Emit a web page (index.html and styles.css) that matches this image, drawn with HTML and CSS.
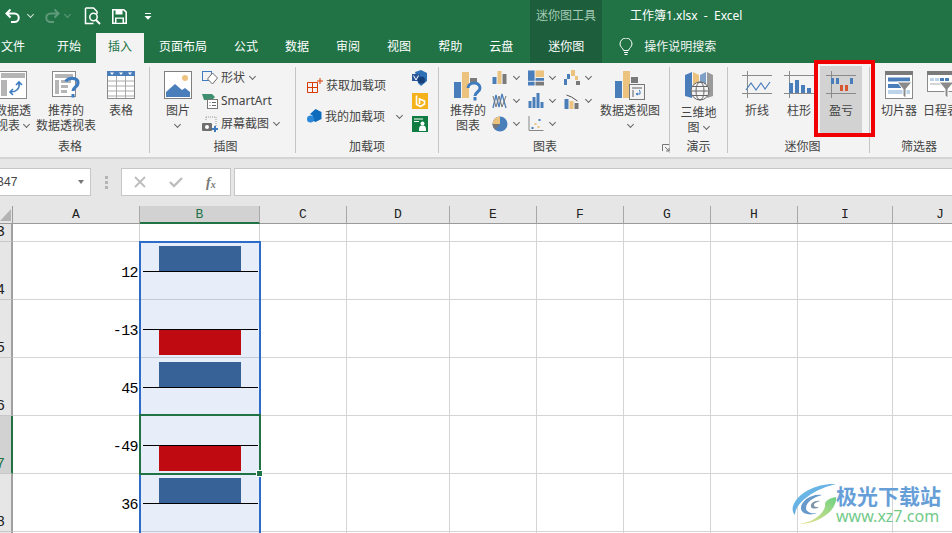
FILE: index.html
```html
<!DOCTYPE html>
<html lang="zh">
<head>
<meta charset="utf-8">
<title>工作簿1.xlsx - Excel</title>
<link rel="stylesheet" href="styles.css">
</head>
<body>
<header class="titlebar">
  <div class="qat">
    <svg class="q-undo" width="16" height="16" viewBox="0 0 16 16"><path d="M5.5 1.5 1.5 5.5 5.5 9.5M2 5.5h7.5a4.2 4.2 0 0 1 0 8.5H6" fill="none" stroke="#fff" stroke-width="2"/></svg>
    <i class="chev chev-w q-c1"></i>
    <svg class="q-redo" width="16" height="16" viewBox="0 0 16 16"><path d="M10.5 1.5 14.5 5.5 10.5 9.5M14 5.5H6.5a4.2 4.2 0 0 0 0 8.5H10" fill="none" stroke="#5f9a7b" stroke-width="2"/></svg>
    <i class="chev chev-d q-c2"></i>
    <svg class="q-prev" width="18" height="18" viewBox="0 0 18 18"><path d="M1.5 1h8l3.500 3.500V7M1.500 1v15.500h8" fill="none" stroke="#fff" stroke-width="1.500"/><circle cx="9.500" cy="10" r="3.700" fill="none" stroke="#fff" stroke-width="1.500"/><path d="m12 13 4 4" stroke="#fff" stroke-width="2"/></svg>
    <svg class="q-save" width="15" height="15" viewBox="0 0 15 15"><path d="M.8.800h11l2.400 2.400v11H.8z" fill="none" stroke="#fff" stroke-width="1.600"/><path d="M3.500 1h7v4.500h-7zM3 8.500h9V14H3z" fill="#fff"/><path d="M4.500 9.800h6v4h-6z" fill="#217346"/></svg>
    <svg class="q-cust" width="8" height="7" viewBox="0 0 8 7"><path d="M1 .5h6" stroke="#fff"/><path d="M.5 3h7L4 6.800z" fill="#fff"/></svg>
  </div>
  <div class="ctx-title">迷你图工具</div>
  <div class="doc-title">工作簿1.xlsx&nbsp; -&nbsp; Excel</div>
</header>

<nav class="tabs">
  <span class="tab tab-file">文件</span>
  <span class="tab">开始</span>
  <span class="tab tab-on">插入</span>
  <span class="tab">页面布局</span>
  <span class="tab">公式</span>
  <span class="tab">数据</span>
  <span class="tab">审阅</span>
  <span class="tab">视图</span>
  <span class="tab">帮助</span>
  <span class="tab">云盘</span>
  <span class="tab tab-ctx">迷你图</span>
  <svg class="bulb" width="14" height="18" viewBox="0 0 14 18"><path d="M4.500 12.500C4 10 1 9 1 6a6 6 0 0 1 12 0c0 3-3 4-3.500 6.500z" fill="none" stroke="#fff"/><path d="M5 14.500h4M5.500 16.500h3" stroke="#fff"/></svg>
  <span class="search">操作说明搜索</span>
</nav>

<section class="ribbon">
  <div class="group g1">
    <div class="tools">
      <div class="btn w44">
        <svg class="ico" width="28" height="28" viewBox="0 0 28 28"><rect x=".5" y=".5" width="27" height="27" fill="#fff" stroke="#8a8a8a"/><path d="M2 2h24v5H2zM2 9h6v16H2z" fill="#b5b5b5"/><path d="M20 12c1 6-3 9-8 9M17 14l3-3 3 3M14 18l-3 3 3 3" fill="none" stroke="#3f7cbf" stroke-width="1.600"/></svg>
        <span>数据透<br>视表 <i class="chev"></i></span>
      </div>
      <div class="btn w60">
        <svg class="ico ico-off" width="28" height="28" viewBox="0 0 28 28"><rect x=".5" y=".5" width="23" height="25" fill="#fff" stroke="#8a8a8a"/><path d="M3 3h18v4H3zM3 9h4v14H3zM9 9h10v3H9zM9 14h7v3H9zM9 19h6v3H9z" fill="#b5b5b5"/><path d="M14 10.500c1-4 12-5 12 1.500 0 4-5 4-5 8" fill="none" stroke="#3f7cbf" stroke-width="3.200"/><rect x="19.500" y="23" width="3" height="3.500" fill="#3f7cbf"/></svg>
        <span>推荐的<br>数据透视表</span>
      </div>
      <div class="btn w44">
        <svg class="ico" width="28" height="28" viewBox="0 0 28 28"><rect x=".5" y=".5" width="27" height="27" fill="#fff" stroke="#8a8a8a"/><path d="M0 0h28v5H0z" fill="#4a7ebb"/><path d="M1 10h26M1 15h26M1 20h26M1 25h26M9.500 5v22M18.500 5v22" stroke="#aaa"/><path d="M3 1.500h4L5 4zM12 1.500h4L14 4zM21 1.500h4L23 4z" fill="#fff"/></svg>
        <span>表格</span>
      </div>
    </div>
    <div class="glabel">表格</div>
  </div>

  <div class="group g2">
    <div class="tools">
      <div class="btn w44">
        <svg class="ico" width="28" height="28" viewBox="0 0 28 28"><rect x=".5" y=".5" width="27" height="27" fill="#fff" stroke="#7f7f7f"/><path d="M2 26v-5l9-8 7 6 3-2 5 4v5z" fill="#4a7ebb"/><circle cx="21" cy="7" r="3" fill="#eec27f"/></svg>
        <span>图片<br><i class="chev"></i></span>
      </div>
      <div class="stack">
        <div class="srow"><svg width="16" height="16" viewBox="0 0 16 16"><rect x=".5" y="1.500" width="9" height="9" fill="none" stroke="#3f7cbf"/><path d="M10.500 3 15.500 8 10.500 14 5.500 9z" fill="#fff" stroke="#6a6a6a"/></svg><span>形状</span><i class="chev"></i></div>
        <div class="srow"><svg width="16" height="16" viewBox="0 0 16 16"><path d="M0 1h10l3 3-3 3H2z" fill="#3f8f70"/><rect x="5.500" y="6.500" width="10" height="9" fill="#fff" stroke="#777"/><path d="M7.500 9.500h1M10 9.500h4M7.500 12.500h1M10 12.500h4" stroke="#666"/></svg><span>SmartArt</span></div>
        <div class="srow"><svg width="16" height="16" viewBox="0 0 16 16"><path d="M4 1h10v9" fill="none" stroke="#999" stroke-dasharray="1 1"/><path d="M4 1v4" stroke="#999" stroke-dasharray="1 1"/><rect x="0" y="7" width="10" height="8" rx="1" fill="#6f6f6f"/><circle cx="5" cy="11" r="2" fill="#fff"/><path d="M13 10v6M10 13h6" stroke="#3f7cbf" stroke-width="2"/></svg><span>屏幕截图</span><i class="chev"></i></div>
      </div>
    </div>
    <div class="glabel">插图</div>
  </div>

  <div class="group g3">
    <div class="tools">
      <div class="addins">
        <div class="arow"><svg width="16" height="16" viewBox="0 0 16 16"><path d="M.5 4.500h10v10H.5zM.5 9.500h10M5.500 4.500v10" fill="none" stroke="#d83b01"/><path d="M13 0v6M10 3h6" stroke="#d83b01"/></svg><span>获取加载项</span></div>
        <div class="arow"><svg width="15" height="15" viewBox="0 0 15 15"><path d="M8.500 0 14.500 3v7l-6 3-3-1.500V6.500L3 5z" fill="#0f6cbd"/><circle cx="3.500" cy="10" r="3.500" fill="#2b88d8"/></svg><span>我的加载项</span><i class="chev chev-add"></i></div>
      </div>
      <div class="store">
        <svg width="16" height="16" viewBox="0 0 16 16"><path d="M3 2 9 0l6 3v8l-6 5-3-3z" fill="#2f6fb5"/><rect x="0" y="4" width="8" height="7" fill="#2b579a"/><path d="m1.500 5.500 2.500 4.500 2.500-4.500" fill="none" stroke="#fff"/><circle cx="9.500" cy="10" r="3.500" fill="#173f7a"/></svg>
        <svg width="16" height="16" viewBox="0 0 16 16"><rect width="16" height="16" fill="#f5b21a"/><path d="M4.500 2.500v9l4 2 4-2.500V8L7.500 6v5" fill="none" stroke="#fff" stroke-width="1.600"/></svg>
        <svg width="16" height="16" viewBox="0 0 16 16"><rect width="16" height="16" fill="#107c41"/><path d="M2 3h9M2 5.500h5" stroke="#fff"/><circle cx="10.500" cy="7.500" r="2" fill="#fff"/><path d="M7 15c0-5 1-5.500 3.500-5.500S14 10 14 15z" fill="#fff"/></svg>
      </div>
    </div>
    <div class="glabel">加载项</div>
  </div>

  <div class="group g4">
    <div class="tools">
      <div class="btn w44">
        <svg class="ico" width="30" height="30" viewBox="0 0 30 30"><path d="M1 11h7v16H1z" fill="#4a7ebb"/><path d="M9 1h7v26H9z" fill="#ecc27f"/><path d="M17 7h7v6h-7z" fill="#7a7a7a"/><path d="M15 17c0-6 12-7 12 0 0 4-5 4-5 8" fill="none" stroke="#3f7cbf" stroke-width="3"/><rect x="20.500" y="26" width="3" height="3.500" fill="#3f7cbf"/></svg>
        <span>推荐的<br>图表</span>
      </div>
      <div class="charts">
        <div class="cc"><svg width="15" height="15" viewBox="0 0 15 15"><path d="M0 7h4v7H0z" fill="#4a7ebb"/><path d="M5 1h4v13H5z" fill="#ecc27f"/><path d="M10 4h4v10h-4z" fill="#7a7a7a"/></svg><i class="chev"></i></div>
        <div class="cc"><svg width="17" height="16" viewBox="0 0 17 16"><path d="M0 0h7v11H0z" fill="#4a7ebb"/><path d="M8 0h9v7H8z" fill="#ecc27f"/><path d="M0 12h7v4H0zM8 8h9v3H8z" fill="#4a7ebb"/><path d="M8 12h9v4H8z" fill="#7a7a7a"/></svg><i class="chev"></i></div>
        <div class="cc"><svg width="16" height="15" viewBox="0 0 16 15"><path d="M0 9h3v6H0zM3 4h3v5H3z" fill="#4a7ebb"/><path d="M7 0h4v6H7zM11 6h3v4h-3z" fill="#ecc27f"/><path d="M12 11h4v4h-4z" fill="#7a7a7a"/></svg><i class="chev"></i></div>
        <div class="cc"><svg width="16" height="16" viewBox="0 0 16 16"><path d="M1 15 4 2l3 12 3-13 4 14" fill="none" stroke="#4a7ebb" stroke-width="1.300"/><path d="M1 3l3 11 3-11 3 11 4-11" fill="none" stroke="#777"/></svg><i class="chev"></i></div>
        <div class="cc"><svg width="15" height="15" viewBox="0 0 15 15"><path d="M0 8h3v7H0zM4 4h3v11H4zM8 0h3v15H8zM12 9h3v6h-3z" fill="#4a7ebb"/></svg><i class="chev"></i></div>
        <div class="cc"><svg width="15" height="16" viewBox="0 0 15 16"><path d="M0 6h4v10H0z" fill="#4a7ebb"/><path d="M5 8h4v8H5z" fill="#ecc27f"/><path d="M10 10h4v6h-4z" fill="#777"/><path d="M2 2 7 4l6 4" fill="none" stroke="#555"/></svg><i class="chev"></i></div>
        <div class="cc"><svg width="16" height="16" viewBox="0 0 16 16"><circle cx="8" cy="8" r="7.500" fill="#4a7ebb"/><path d="M8 8V.5A7.500 7.500 0 0 0 .5 8z" fill="#ecc27f"/><path d="M8 8H.5A7.500 7.500 0 0 0 3 13.500z" fill="#777"/></svg><i class="chev"></i></div>
        <div class="cc"><svg width="15" height="15" viewBox="0 0 15 15"><path d="M.5 0v14.500H15" fill="none" stroke="#888"/><path d="M3 11h2v2H3zM10 3h2v2h-2z" fill="#4a7ebb"/><path d="M6 7h2v2H6zM9 10h2v2H9z" fill="#ecc27f"/></svg><i class="chev"></i></div>
      </div>
      <div class="btn w60">
        <svg class="ico" width="30" height="30" viewBox="0 0 30 30"><path d="M0 10h7v17H0z" fill="#4a7ebb"/><path d="M8 0h7v27H8z" fill="#ecc27f"/><path d="M16 6h7v6h-7z" fill="#7a7a7a"/><rect x="14.500" y="13.500" width="15" height="15" fill="#f3f3f3" stroke="#777"/><path d="M17 16h10v2H17zM17 19h2v7h-2z" fill="#aaa"/><path d="M25 20v3h-4M23 22l-2 1 2 1M25 20l-1-1" fill="none" stroke="#3f7cbf"/></svg>
        <span>数据透视图<br><i class="chev"></i></span>
      </div>
    </div>
    <div class="glabel glabel-launch">图表</div>
    <svg class="launch" width="8" height="8" viewBox="0 0 8 8"><path d="M.5 7V.5H7M3 3l4 4M7 4v3H4" fill="none" stroke="#777"/></svg>
  </div>

  <div class="group g5">
    <div class="tools">
      <div class="btn w57">
        <svg class="ico" width="30" height="30" viewBox="0 0 30 30"><path d="M1 4 8 1v26l-7-2z" fill="#4a7ebb"/><path d="M9 1l6 3v23l-6-1z" fill="#ecc27f"/><path d="M16 4l6-3v25l-6 1z" fill="#7f9fc6"/><path d="M23 1l6 3v21l-6 2z" fill="#9a9a9a"/><circle cx="16" cy="20" r="9" fill="#f3f3f3" stroke="#666"/><ellipse cx="16" cy="20" rx="4" ry="9" fill="none" stroke="#666"/><path d="M7 20h18M8.500 15.500h15M8.500 24.500h15" stroke="#666"/></svg>
        <span>三维地<br>图 <i class="chev"></i></span>
      </div>
    </div>
    <div class="glabel">演示</div>
  </div>

  <div class="group g6">
    <div class="tools tools-spark">
      <div class="btn w42">
        <svg class="ico" width="30" height="28" viewBox="0 0 30 28"><path d="M0 4.500h30M0 22.500h30M5.500 0v27" stroke="#8a8a8a"/><path d="M4 19l5-7 5 7 5-7 4 6 5-7" fill="none" stroke="#4a7ebb" stroke-width="1.200"/></svg>
        <span>折线</span>
      </div>
      <div class="btn w42">
        <svg class="ico" width="30" height="28" viewBox="0 0 30 28"><path d="M0 4.500h30M0 22.500h30M5.500 0v27" stroke="#8a8a8a"/><path d="M5 12h4v10H5zM11 9h4v13h-4zM17 14h4v8h-4zM23 17h4v5h-4z" fill="#4a7ebb"/></svg>
        <span>柱形</span>
      </div>
      <div class="btn w42 btn-on">
        <svg class="ico" width="30" height="28" viewBox="0 0 30 28"><path d="M0 4.500h30M0 22.500h30M5.500 0v27" stroke="#8a8a8a"/><path d="M5 7h3v6H5zM10 7h3v6h-3zM24 7h3v6h-3z" fill="#4a7ebb"/><path d="M14 14h3v6h-3zM19 14h3v6h-3z" fill="#d8562f"/></svg>
        <span>盈亏</span>
      </div>
    </div>
    <div class="glabel">迷你图</div>
  </div>

  <div class="group g7">
    <div class="tools tools-spark">
      <div class="btn w42">
        <svg class="ico" width="28" height="28" viewBox="0 0 28 28"><rect x=".5" y=".5" width="27" height="27" fill="#fff" stroke="#8a8a8a"/><path d="M0 0h28v4H0z" fill="#7a7a7a"/><path d="M3 6.500h22v4H3z" fill="#4a7ebb"/><path d="M3 13h13v4H3z" fill="#4a7ebb"/><path d="M3 19h22v4H3z" fill="#bcd3ea"/><path d="M12 11h15l-6 7v9l-3-2v-7z" fill="#8a8a8a" stroke="#fff"/></svg>
        <span>切片器</span>
      </div>
      <div class="btn w42">
        <svg class="ico" width="28" height="28" viewBox="0 0 28 28"><rect x=".5" y=".5" width="27" height="20" fill="#fff" stroke="#8a8a8a"/><path d="M0 0h28v4H0z" fill="#7a7a7a"/><path d="M3 7h4v3H3zM8 7h4v3H8z" fill="#bcd3ea"/><path d="M13 7h4v3h-4zM18 7h4v3h-4z" fill="#4a7ebb"/><path d="M3 13h22" stroke="#aaa"/><path d="M12 11h15l-6 7v9l-3-2v-7z" fill="#8a8a8a" stroke="#fff"/></svg>
        <span>日程表</span>
      </div>
    </div>
    <div class="glabel glabel-g7">筛选器</div>
  </div>
</section>

<section class="fbar">
  <div class="namebox"><span>B47</span><i class="tri"></i></div>
  <div class="dots"><i></i><i></i><i></i></div>
  <div class="fbtns">
    <svg width="12" height="12" viewBox="0 0 12 12"><path d="m1 1 10 10M11 1 1 11" stroke="#bdbdbd" stroke-width="1.800"/></svg>
    <svg width="14" height="12" viewBox="0 0 14 12"><path d="m1 6 4 4 8-8" fill="none" stroke="#bdbdbd" stroke-width="2.400"/></svg>
    <span class="fx">f<sub>x</sub></span>
  </div>
  <div class="finput"></div>
</section>

<main class="sheet">
  <div class="ch corner"><svg width="11" height="12" viewBox="0 0 11 12"><path d="M11 0v12H0z" fill="#b4b4b4"/></svg></div>
  <div class="ch">A</div><div class="ch ch-on">B</div><div class="ch">C</div><div class="ch">D</div><div class="ch">E</div><div class="ch">F</div><div class="ch">G</div><div class="ch">H</div><div class="ch">I</div><div class="ch">J</div>

  <div class="rh">3</div>
  <div class="c"></div><div class="c c-white"></div><div class="c"></div><div class="c"></div><div class="c"></div><div class="c"></div><div class="c"></div><div class="c"></div><div class="c"></div><div class="c"></div>

  <div class="rh">4</div>
  <div class="c num">12</div>
  <div class="c sp"><div class="bar up"></div><div class="axis"></div></div>
  <div class="c"></div><div class="c"></div><div class="c"></div><div class="c"></div><div class="c"></div><div class="c"></div><div class="c"></div><div class="c"></div>

  <div class="rh">5</div>
  <div class="c num">-13</div>
  <div class="c sp sp-neg"><div class="axis"></div><div class="bar down"></div></div>
  <div class="c"></div><div class="c"></div><div class="c"></div><div class="c"></div><div class="c"></div><div class="c"></div><div class="c"></div><div class="c"></div>

  <div class="rh">6</div>
  <div class="c num">45</div>
  <div class="c sp"><div class="bar up"></div><div class="axis"></div></div>
  <div class="c"></div><div class="c"></div><div class="c"></div><div class="c"></div><div class="c"></div><div class="c"></div><div class="c"></div><div class="c"></div>

  <div class="rh rh-on">7</div>
  <div class="c num">-49</div>
  <div class="c sp sp-neg"><div class="axis"></div><div class="bar down"></div></div>
  <div class="c"></div><div class="c"></div><div class="c"></div><div class="c"></div><div class="c"></div><div class="c"></div><div class="c"></div><div class="c"></div>

  <div class="rh">8</div>
  <div class="c num">36</div>
  <div class="c sp"><div class="bar up"></div><div class="axis"></div></div>
  <div class="c"></div><div class="c"></div><div class="c"></div><div class="c"></div><div class="c"></div><div class="c"></div><div class="c"></div><div class="c"></div>

  <div class="rh"></div>
  <div class="c"></div><div class="c sp"></div><div class="c"></div><div class="c"></div><div class="c"></div><div class="c"></div><div class="c"></div><div class="c"></div><div class="c"></div><div class="c"></div>

  <div class="sel-range"></div>
  <div class="sel-cell"><i class="handle"></i></div>
</main>

<div class="callout"></div>

<aside class="mark">
  <svg width="46" height="42" viewBox="0 0 46 42">
    <defs>
      <linearGradient id="mg1" x1="0" y1="0" x2="1" y2="1"><stop offset="0" stop-color="#63c3ee"/><stop offset="1" stop-color="#5b8fd0"/></linearGradient>
      <linearGradient id="mg2" x1="1" y1="0" x2="0" y2="1"><stop offset="0" stop-color="#66cf7c"/><stop offset="1" stop-color="#f0e28a"/></linearGradient>
    </defs>
    <path d="M44 1C26 0 6 9 1 23c-1 4 0 7 2 9C3 20 22 6 44 1z" fill="url(#mg1)"/>
    <path d="M44 14c2 12-16 27-37 27 17-2 27-13 26-20 0-3 5-6 11-7z" fill="url(#mg2)"/>
    <path d="M30 12C20 10 8 18 9 26c1 5 9 7 16 4-6 1-11-1-11-5 0-6 8-11 16-13z" fill="#5f95c9"/>
    <path d="M28 18c-6-1-10 3-9 6 1 2 5 2 8 0-3 0-5 0-5-2 0-2 3-3 6-4z" fill="#7a8fa6"/>
  </svg>
  <div class="mark-text"><b>极光下载站</b><span>www.xz7.com</span></div>
</aside>
</body>
</html>
```
FILE: styles.css
```css
* { box-sizing: border-box; }
html, body { margin: 0; height: 533px; overflow: hidden; }
body {
  position: relative;
  width: 952px;
  background: #fff;
  font: 12px/15px "Noto Sans", "Noto Sans CJK SC", sans-serif;
  color: #444;
}
i { font-style: normal; }
svg { display: block; flex: none; }

.chev {
  display: inline-block;
  width: 5px;
  height: 5px;
  margin: 0 1px 3px;
  border-right: 1px solid #666;
  border-bottom: 1px solid #666;
  transform: rotate(45deg);
}
.chev-w { border-color: #d5e6dc; }
.chev-d { border-color: #5f9a7b; }

/* title bar */
.titlebar { display: flex; height: 33px; background: #217346; color: #fff; }
.qat { width: 530px; height: 33px; display: flex; align-items: center; }
.q-undo { margin: -2px 0 0 5px; }
.q-c1 { margin: 0 0 4px 7px; }
.q-redo { margin: -2px 0 0 11px; }
.q-c2 { margin: 0 0 4px 5px; }
.q-prev { margin: -1px 0 0 14px; }
.q-save { margin: -1px 0 0 10px; }
.q-cust { margin: 0 0 0 17px; }
.ctx-title { width: 72px; background: #1d5e3c; color: #a5cbb5; text-align: center; line-height: 31px; }
.doc-title { margin-left: 28px; line-height: 31px; color: #fff; white-space: nowrap; }

/* tabs */
.tabs { display: flex; align-items: stretch; gap: 3px; height: 30px; margin-left: -11px; background: #217346; color: #fff; }
.tab { padding: 0 12px; line-height: 28px; white-space: nowrap; }
.tab-file { margin-right: 5px; }
.tab-on { background: #f3f3f3; color: #217346; }
.tab-ctx { width: 72px; margin-left: 2px; padding: 0; text-align: center; background: #1d5e3c; }
.bulb { margin: 5px 0 0 14px; }
.search { margin-left: 8px; line-height: 28px; color: #f0f5f2; white-space: nowrap; }

/* ribbon */
.ribbon { display: flex; height: 96px; margin-left: -9px; padding-top: 4px; background: #f3f3f3; border-bottom: 2px solid #d4d4d4; }
.group { position: relative; flex: none; display: flex; flex-direction: column; height: 86px; border-right: 1px solid #c6c6c6; }
.g1 { width: 159px; }
.g2 { width: 146px; padding-left: 6px; }
.g3 { width: 143px; }
.g4 { width: 231px; padding-left: 7px; }
.g5 { width: 58px; }
.g6 { width: 142px; padding-left: 8px; }
.g7 { width: 98px; padding-left: 8px; border-right: 0; }
.tools { flex: 1; display: flex; min-height: 0; }
.tools-spark { margin-top: -1px; }
.glabel { height: 15px; margin-bottom: -1px; text-align: center; color: #444; }
.glabel-launch { padding-right: 25px; }
.glabel-g7 { margin-left: -8px; }
.launch { position: absolute; left: 223px; top: 77px; }

.btn { flex: none; display: flex; flex-direction: column; align-items: center; padding-top: 4px; text-align: center; white-space: nowrap; }
.tools-spark .btn { padding-top: 5px; }
.btn span { margin-top: 4px; }
.w42 { width: 42px; }
.w44 { width: 44px; }
.w57 { width: 57px; }
.w60 { width: 60px; }
.btn-on { height: 70px; background: #d2d2d2; }
.g1 .w60 { margin: 0 3px 0 1px; }
.g4 .ico { margin-bottom: -2px; }

.stack { display: flex; flex-direction: column; margin: -1px 0 0 2px; }
.srow { display: flex; align-items: center; height: 23px; white-space: nowrap; }
.srow svg { margin-right: 3px; }
.srow .chev { margin-left: 5px; }

.addins { width: 115px; padding: 3px 0 0 11px; }
.arow { display: flex; align-items: center; height: 31px; white-space: nowrap; }
.arow svg { margin-right: 3px; }
.chev-add { margin-left: 12px; }
.store { display: flex; flex-direction: column; gap: 7px; margin: 3px 0 0 1px; }

.charts { display: grid; grid-template-columns: repeat(3, 36px); grid-auto-rows: 23px; width: 108px; margin: -1px 0 0 2px; }
.cc { display: flex; align-items: center; gap: 5px; }
.cc svg { width: 16px; }

/* formula bar */
.fbar { display: flex; align-items: stretch; height: 47px; padding: 9px 0 10px; background: #e6e6e6; }
.namebox { display: flex; align-items: center; justify-content: space-between; width: 101px; margin-left: -10px; padding: 0 6px 0 5px; background: #fff; border: 1px solid #c6c6c6; color: #444; font-family: "Liberation Sans", sans-serif; }
.tri { width: 0; height: 0; border: 3.5px solid transparent; border-top: 4px solid #777; border-bottom: 0; }
.dots { display: flex; flex-direction: column; justify-content: center; gap: 2px; width: 30px; padding-left: 14px; }
.dots i { width: 3px; height: 3px; background: #b4b4b4; }
.fbtns { display: flex; align-items: center; gap: 23px; width: 110px; padding: 0 0 0 12px; background: #fff; border: 1px solid #c6c6c6; }
.fx { font: italic bold 14px/15px "Liberation Serif", serif; color: #777; }
.fx sub { font-size: 10px; line-height: 0; vertical-align: -1px; }
.finput { flex: 1; margin-left: 3px; background: #fff; border: 1px solid #c6c6c6; border-right: 0; }

/* sheet */
.sheet {
  position: relative;
  display: grid;
  grid-template-columns: 13px 127px 120px 87px 103px 87px 87px 87px 87px 95px 95px;
  grid-template-rows: 18px 18px repeat(5, 58px) 20px;
  font-family: "Liberation Mono", monospace;
  color: #000;
}
.ch { background: #e6e6e6; border-right: 1px solid #a8a8a8; border-bottom: 1px solid #9a9a9a; text-align: center; font-size: 13px; line-height: 17px; color: #222; }
.corner { display: flex; align-items: center; justify-content: flex-end; padding: 1px 1px 0 0; border-right-color: #9a9a9a; }
.ch-on { background: #d2d2d2; color: #217346; border-bottom: 2px solid #217346; }
.rh { display: flex; align-items: flex-end; justify-content: flex-end; padding: 0 6px 1px 0; background: #e6e6e6; border-right: 2px solid #a0a0a0; border-bottom: 1px solid #c8c8c8; font-size: 15px; line-height: 15px; color: #222; overflow: hidden; }
.rh-on { background: #d2d2d2; color: #217346; border-right-color: #217346; }
.c { border-right: 1px solid #d4d4d4; border-bottom: 1px solid #d4d4d4; }
.num { display: flex; align-items: center; justify-content: flex-end; padding: 6px 1px 0 0; font-size: 15px; letter-spacing: -.6px; }
.sp { display: flex; flex-direction: column; align-items: center; padding: 4px 1px 0 3px; background: #e7eef9; border-bottom-color: #c2cad6; }
.sp-neg { padding-top: 29px; }
.bar { flex: none; width: 82px; height: 25px; margin-right: 1px; }
.up { background: #366297; }
.down { background: #c00a12; }
.axis { flex: none; width: 100%; height: 1px; background: #000; }
.sel-range { position: absolute; left: 139px; top: 35px; width: 122px; bottom: 0; border: solid #2f6cc8; border-width: 2px 2px 0; }
.sel-cell { position: absolute; left: 139px; top: 208px; width: 122px; height: 61px; border: 2px solid #217346; }
.handle { position: absolute; right: -3px; bottom: -3px; width: 5px; height: 5px; background: #217346; outline: 1px solid #fff; }

/* annotation */
.callout { position: absolute; left: 814px; top: 60px; width: 61px; height: 77px; border: 4px solid #f00000; }

/* watermark */
.mark { position: absolute; left: 792px; top: 483px; display: flex; align-items: flex-start; opacity: .95; }
.mark-text { display: flex; flex-direction: column; margin: 0 0 0 -2px; white-space: nowrap; }
.mark-text b { font: bold 21px/24px "Noto Sans CJK SC", sans-serif; color: #5e9ad6; }
.mark-text span { margin-top: 1px; font: 16px/17px "Noto Sans", sans-serif; color: #6cc884; }
```
